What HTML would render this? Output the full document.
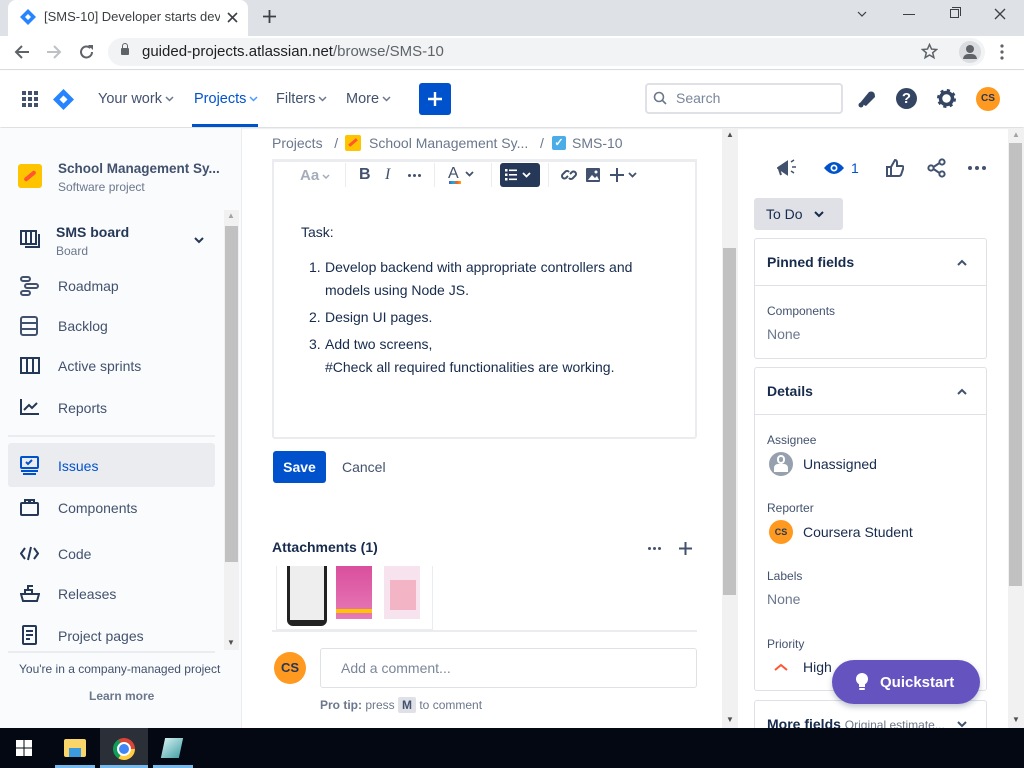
<!DOCTYPE html>
<html><head><meta charset="utf-8">
<style>
*{box-sizing:border-box;margin:0;padding:0}
body{width:1024px;height:768px;overflow:hidden;position:relative;font-family:"Liberation Sans",Arial,sans-serif;color:#172b4d;background:#fff}
.a{position:absolute}
.t{font-size:14px;white-space:nowrap}
svg{display:block}
svg.c{display:inline-block;vertical-align:middle;margin-left:3px}
</style></head><body>
<!-- chrome tab bar -->
<div class="a" style="left:0;top:0;width:1024px;height:36px;background:#dee1e6"></div>
<div class="a" style="left:8px;top:0;width:240px;height:36px;background:#fff;border-radius:8px 8px 0 0"></div>
<svg class="a" style="left:20px;top:9px" width="16" height="16"><path d="M8 0L16 8L8 16L0 8Z" fill="#2684ff"/><path d="M8 5L11 8L8 11L5 8Z" fill="#fff"/></svg>
<div class="a t" style="left:44px;top:9px;font-size:13px;color:#3c4043;width:176px;overflow:hidden">[SMS-10] Developer starts develo</div>
<svg class="a" style="left:227px;top:12px" width="11" height="11"><path d="M1 1l9 9M10 1l-9 9" stroke="#3c4043" stroke-width="1.6"/></svg>
<svg class="a" style="left:263px;top:10px" width="13" height="13"><path d="M6.5 0v13M0 6.5h13" stroke="#3c4043" stroke-width="1.8"/></svg>
<svg class="a" style="left:857px;top:11px" width="10" height="6"><path d="M1 1l4 4 4-4" stroke="#3c4043" stroke-width="1.2" fill="none"/></svg>
<div class="a" style="left:903px;top:14px;width:12px;height:1px;background:#3c4043"></div>
<div class="a" style="left:950px;top:9px;width:9px;height:9px;border:1px solid #3c4043"></div>
<div class="a" style="left:952px;top:7px;width:9px;height:9px;border-top:1px solid #3c4043;border-right:1px solid #3c4043"></div>
<svg class="a" style="left:994px;top:8px" width="12" height="12"><path d="M1 1l10 10M11 1l-10 10" stroke="#3c4043" stroke-width="1.3"/></svg>
<!-- address bar -->
<div class="a" style="left:0;top:36px;width:1024px;height:34px;background:#fff;border-bottom:1px solid #dadce0"></div>
<svg class="a" style="left:14px;top:44px" width="16" height="16"><path d="M15 8H2M8 2L2 8l6 6" stroke="#5f6368" stroke-width="2" fill="none"/></svg>
<svg class="a" style="left:46px;top:44px" width="16" height="16"><path d="M1 8h13M8 2l6 6-6 6" stroke="#bdc1c6" stroke-width="2" fill="none"/></svg>
<svg class="a" style="left:79px;top:44px" width="16" height="16"><path d="M13 8a5.5 5.5 0 1 1-1.6-3.9" stroke="#5f6368" stroke-width="2" fill="none"/><path d="M9 1h5v5Z" fill="#5f6368"/></svg>
<div class="a" style="left:108px;top:38px;width:877px;height:28px;background:#f1f3f4;border-radius:14px"></div>
<div class="a" style="left:121px;top:48px;width:8px;height:7px;background:#5f6368;border-radius:1px"></div>
<div class="a" style="left:122px;top:43px;width:6px;height:7px;border:1.5px solid #5f6368;border-radius:3px 3px 0 0"></div>
<div class="a t" style="left:142px;top:43px;font-size:15px;color:#202124">guided-projects.atlassian.net<span style="color:#5f6368">/browse/SMS-10</span></div>
<svg class="a" style="left:921px;top:43px" width="17" height="17"><path d="M8.5 1.5l2 4.6 5 .4-3.8 3.3 1.2 4.9-4.4-2.7-4.4 2.7 1.2-4.9L1.5 6.5l5-.4Z" stroke="#5f6368" stroke-width="1.5" fill="none"/></svg>
<div class="a" style="left:959px;top:41px;width:22px;height:22px;border-radius:50%;background:#dadce0"></div>
<div class="a" style="left:966px;top:45px;width:8px;height:8px;border-radius:50%;background:#5f6368"></div>
<div class="a" style="left:963px;top:54px;width:14px;height:5px;border-radius:5px 5px 0 0;background:#5f6368"></div>
<svg class="a" style="left:1000px;top:44px" width="4" height="16" fill="#5f6368"><circle cx="2" cy="2" r="1.6"/><circle cx="2" cy="8" r="1.6"/><circle cx="2" cy="14" r="1.6"/></svg>
<!-- jira header -->
<div class="a" style="left:0;top:71px;width:1024px;height:56px;background:#fff;box-shadow:0 1px 2px rgba(9,30,66,.2)"></div>
<svg class="a" style="left:22px;top:91px" width="16" height="16" fill="#42526e"><rect x="0" y="0" width="4" height="4"/><rect x="6" y="0" width="4" height="4"/><rect x="12" y="0" width="4" height="4"/><rect x="0" y="6" width="4" height="4"/><rect x="6" y="6" width="4" height="4"/><rect x="12" y="6" width="4" height="4"/><rect x="0" y="12" width="4" height="4"/><rect x="6" y="12" width="4" height="4"/><rect x="12" y="12" width="4" height="4"/></svg>
<svg class="a" style="left:53px;top:89px" width="21" height="21"><path d="M10.5 0L21 10.5L10.5 21L0 10.5Z" fill="#2684ff"/><path d="M10.5 6.5L14.5 10.5L10.5 14.5L6.5 10.5Z" fill="#fff"/></svg>
<div class="a t" style="left:98px;top:91px;font-size:14.5px;color:#42526e">Your work<svg class="c" width="9" height="6"><path d="M1 1l3.5 3.5L8 1" stroke="#6b778c" stroke-width="1.5" fill="none"/></svg></div>
<div class="a t" style="left:194px;top:91px;font-size:14.5px;color:#0052cc">Projects<svg class="c" width="9" height="6"><path d="M1 1l3.5 3.5L8 1" stroke="#4c9aff" stroke-width="1.5" fill="none"/></svg></div>
<div class="a" style="left:192px;top:124px;width:66px;height:3px;background:#0052cc"></div>
<div class="a t" style="left:276px;top:91px;font-size:14.5px;color:#42526e">Filters<svg class="c" width="9" height="6"><path d="M1 1l3.5 3.5L8 1" stroke="#6b778c" stroke-width="1.5" fill="none"/></svg></div>
<div class="a t" style="left:346px;top:91px;font-size:14.5px;color:#42526e">More<svg class="c" width="9" height="6"><path d="M1 1l3.5 3.5L8 1" stroke="#6b778c" stroke-width="1.5" fill="none"/></svg></div>
<div class="a" style="left:419px;top:83px;width:32px;height:32px;background:#0052cc;border-radius:3px"></div>
<svg class="a" style="left:428px;top:92px" width="14" height="14"><path d="M7 0v14M0 7h14" stroke="#fff" stroke-width="2.4"/></svg>
<div class="a" style="left:645px;top:83px;width:198px;height:31px;border:2px solid #dfe1e6;border-radius:4px"></div>
<svg class="a" style="left:653px;top:91px" width="14" height="14"><circle cx="6" cy="6" r="4.5" stroke="#6b778c" stroke-width="1.6" fill="none"/><path d="M9.5 9.5L13 13" stroke="#6b778c" stroke-width="1.6"/></svg>
<div class="a t" style="left:676px;top:90px;color:#7a869a">Search</div>
<svg class="a" style="left:857px;top:88px" width="20" height="20"><path d="M3 15L12 4Q18 2 18 9L9 18Z" fill="#344563"/><circle cx="4" cy="17" r="2.5" fill="#344563"/></svg>
<div class="a" style="left:896px;top:88px;width:21px;height:21px;border-radius:50%;background:#344563;color:#fff;font-weight:bold;font-size:15px;text-align:center;line-height:21px">?</div>
<svg class="a" style="left:936px;top:88px" width="21" height="21"><circle cx="10.5" cy="10.5" r="6" stroke="#344563" stroke-width="3.5" fill="none"/><circle cx="10.5" cy="10.5" r="8" stroke="#344563" stroke-width="3" fill="none" stroke-dasharray="3 3.3"/></svg>
<div class="a" style="left:976px;top:87px;width:24px;height:24px;border-radius:50%;background:#ff991f;color:#253858;font-size:10px;font-weight:bold;text-align:center;line-height:24px">CS</div>
<!-- sidebar -->
<div class="a" style="left:0;top:128px;width:242px;height:600px;background:#fafbfc;border-right:1px solid #ebecf0"></div>
<div class="a" style="left:18px;top:164px;width:24px;height:24px;background:#ffc400;border-radius:3px"></div>
<div class="a" style="left:23px;top:174px;width:14px;height:4px;background:#ff5630;transform:rotate(-40deg);border-radius:2px"></div>
<div class="a t" style="left:58px;top:161px;font-weight:bold;color:#42526e;font-size:13.5px">School Management Sy...</div>
<div class="a t" style="left:58px;top:180px;font-size:12px;color:#6b778c">Software project</div>
<div class="a" style="left:224px;top:210px;width:15px;height:440px;background:#f1f1f1"></div>
<div class="a" style="left:225px;top:226px;width:13px;height:336px;background:#c1c1c1"></div>
<div class="a t" style="left:227px;top:211px;font-size:8px;color:#a3a3a3">▲</div>
<div class="a t" style="left:227px;top:638px;font-size:8px;color:#505050">▼</div>
<svg class="a" style="left:20px;top:229px" width="22" height="22" fill="none" stroke="#253858" stroke-width="2"><rect x="1" y="2" width="15" height="13"/><path d="M6 2v13M11 2v13M19 5v13H5"/></svg>
<div class="a t" style="left:56px;top:224px;font-weight:bold;color:#253858">SMS board</div>
<div class="a t" style="left:56px;top:244px;font-size:12px;color:#6b778c">Board</div>
<svg class="a" style="left:194px;top:237px" width="10" height="7"><path d="M1 1l4 4 4-4" stroke="#253858" stroke-width="2" fill="none"/></svg>
<svg class="a" style="left:20px;top:276px" width="20" height="20" fill="none" stroke="#42526e" stroke-width="2"><rect x="1" y="1" width="9" height="4" rx="2"/><rect x="5" y="8" width="13" height="4" rx="2"/><rect x="1" y="15" width="9" height="4" rx="2"/></svg>
<div class="a t" style="left:58px;top:278px;color:#42526e">Roadmap</div>
<svg class="a" style="left:20px;top:316px" width="20" height="20" fill="none" stroke="#42526e" stroke-width="2"><rect x="1" y="1" width="16" height="18" rx="2"/><path d="M1 7h16M1 13h16"/></svg>
<div class="a t" style="left:58px;top:318px;color:#42526e">Backlog</div>
<svg class="a" style="left:20px;top:357px" width="20" height="18" fill="none" stroke="#253858" stroke-width="2"><rect x="1" y="1" width="18" height="15"/><path d="M7 1v15M13 1v15"/></svg>
<div class="a t" style="left:58px;top:358px;color:#42526e">Active sprints</div>
<svg class="a" style="left:20px;top:398px" width="20" height="18" fill="none" stroke="#253858" stroke-width="2"><path d="M1 1v15h18M4 12l5-5 3 3 5-5"/></svg>
<div class="a t" style="left:58px;top:400px;color:#42526e">Reports</div>
<div class="a" style="left:8px;top:435px;width:207px;height:2px;background:#ebecf0"></div>
<div class="a" style="left:8px;top:443px;width:207px;height:44px;background:#ebecf0;border-radius:3px"></div>
<svg class="a" style="left:20px;top:456px" width="20" height="20" fill="none" stroke="#0052cc" stroke-width="2"><rect x="1" y="1" width="17" height="11" rx="1"/><path d="M6 6l2 2 4-4M1 15h17M3 18h13"/></svg>
<div class="a t" style="left:58px;top:458px;color:#0052cc">Issues</div>
<svg class="a" style="left:20px;top:499px" width="20" height="18" fill="none" stroke="#253858" stroke-width="2"><rect x="1" y="4" width="17" height="12" rx="1"/><path d="M5 4V1h4v3M10 4V1h4v3"/></svg>
<div class="a t" style="left:58px;top:500px;color:#42526e">Components</div>
<svg class="a" style="left:20px;top:546px" width="19" height="15" fill="none" stroke="#253858" stroke-width="2"><path d="M5 2L1 7.5 5 13M14 2l4 5.5-4 5.5M11 1L8 14"/></svg>
<div class="a t" style="left:58px;top:546px;color:#42526e">Code</div>
<svg class="a" style="left:20px;top:585px" width="20" height="18" fill="none" stroke="#253858" stroke-width="2"><path d="M1 9h18l-2 7H3Z M5 9V5h7v4M8 5V1h5"/></svg>
<div class="a t" style="left:58px;top:586px;color:#42526e">Releases</div>
<svg class="a" style="left:22px;top:625px" width="16" height="20" fill="none" stroke="#253858" stroke-width="2"><rect x="1" y="1" width="13" height="18" rx="1"/><path d="M4 6h7M4 10h7M4 14h4"/></svg>
<div class="a t" style="left:58px;top:628px;color:#42526e">Project pages</div>
<div class="a" style="left:8px;top:651px;width:207px;height:2px;background:#ebecf0"></div>
<div class="a t" style="left:19px;top:662px;font-size:12px;color:#42526e">You're in a company-managed project</div>
<div class="a t" style="left:89px;top:689px;font-size:12px;color:#6b778c;font-weight:bold">Learn more</div>
<!-- main -->
<div class="a t" style="left:272px;top:135px;color:#6b778c">Projects&nbsp;&nbsp; /</div>
<div class="a" style="left:345px;top:135px;width:16px;height:16px;background:#ffc400;border-radius:2px"></div>
<div class="a" style="left:348px;top:141px;width:10px;height:3px;background:#ff5630;transform:rotate(-40deg)"></div>
<div class="a t" style="left:369px;top:135px;color:#6b778c">School Management Sy...&nbsp;&nbsp; /</div>
<div class="a" style="left:552px;top:136px;width:14px;height:14px;background:#4bade8;border-radius:2px;color:#fff;font-size:11px;text-align:center;line-height:14px;font-weight:bold">✓</div>
<div class="a t" style="left:572px;top:135px;color:#6b778c">SMS-10</div>
<div class="a" style="left:272px;top:159px;width:425px;height:280px;border:2px solid #ebecf0;border-top-width:3px;border-radius:0 0 3px 3px"></div>
<div class="a t" style="left:300px;top:167px;font-size:15px;color:#a5adba;font-weight:bold">Aa<svg class="c" width="8" height="5"><path d="M1 1l3 3 3-3" stroke="#a5adba" stroke-width="1.5" fill="none"/></svg></div>
<div class="a" style="left:345px;top:163px;width:1px;height:24px;background:#ebecf0"></div>
<div class="a t" style="left:359px;top:166px;font-size:16px;color:#42526e;font-weight:bold">B</div>
<div class="a t" style="left:385px;top:166px;font-size:16px;color:#42526e;font-style:italic;font-family:'Liberation Serif',serif">I</div>
<svg class="a" style="left:408px;top:174px" width="13" height="3" fill="#42526e"><circle cx="1.5" cy="1.5" r="1.5"/><circle cx="6.5" cy="1.5" r="1.5"/><circle cx="11.5" cy="1.5" r="1.5"/></svg>
<div class="a" style="left:434px;top:163px;width:1px;height:24px;background:#ebecf0"></div>
<div class="a t" style="left:448px;top:165px;font-size:16px;color:#42526e">A<svg class="c" style="margin-left:6px" width="9" height="6"><path d="M1 1l3.5 3.5L8 1" stroke="#42526e" stroke-width="1.8" fill="none"/></svg></div>
<div class="a" style="left:449px;top:181px;width:12px;height:3px;background:linear-gradient(90deg,#6554c0,#00b8d9,#ff5630,#ffab00)"></div>
<div class="a" style="left:491px;top:163px;width:1px;height:24px;background:#ebecf0"></div>
<div class="a" style="left:500px;top:163px;width:40px;height:24px;background:#253858;border-radius:3px"></div>
<svg class="a" style="left:505px;top:168px" width="30" height="14" fill="#fff"><rect x="0" y="1" width="2.5" height="2.5"/><rect x="0" y="5.5" width="2.5" height="2.5"/><rect x="0" y="10" width="2.5" height="2.5"/><rect x="4" y="1.5" width="8" height="1.6"/><rect x="4" y="6" width="8" height="1.6"/><rect x="4" y="10.5" width="8" height="1.6"/><path d="M18 5l3.5 3.5L25 5" stroke="#fff" stroke-width="1.8" fill="none"/></svg>
<div class="a" style="left:548px;top:163px;width:1px;height:24px;background:#ebecf0"></div>
<svg class="a" style="left:561px;top:167px" width="16" height="16" fill="none" stroke="#42526e" stroke-width="2"><path d="M7 9l-2 2a2.5 2.5 0 0 1-3.5-3.5l3-3A2.5 2.5 0 0 1 8 5M9 7l2-2a2.5 2.5 0 0 1 3.5 3.5l-3 3A2.5 2.5 0 0 1 8 11"/></svg>
<svg class="a" style="left:586px;top:168px" width="14" height="14"><rect x="0" y="0" width="14" height="14" rx="1" fill="#42526e"/><path d="M2 12l4-5 3 3 2-2 2 4Z" fill="#fff"/><circle cx="10" cy="4" r="1.5" fill="#fff"/></svg>
<svg class="a" style="left:610px;top:168px" width="28" height="14"><path d="M7 0v14M0 7h14" stroke="#42526e" stroke-width="2"/><path d="M19 5l3.5 3.5L26 5" stroke="#42526e" stroke-width="1.8" fill="none"/></svg>
<div class="a t" style="left:301px;top:224px;color:#172b4d">Task:</div>
<div class="a" style="left:309px;top:256px;font-size:14px;color:#172b4d;line-height:23px">
<div style="display:flex"><span style="width:16px">1.</span><span>Develop backend with appropriate controllers and<br>models using Node JS.</span></div>
<div style="display:flex;margin-top:4px"><span style="width:16px">2.</span><span>Design UI pages.</span></div>
<div style="display:flex;margin-top:4px"><span style="width:16px">3.</span><span>Add two screens,<br>#Check all required functionalities are working.</span></div>
</div>
<div class="a" style="left:273px;top:451px;width:53px;height:32px;background:#0052cc;border-radius:3px;color:#fff;font-weight:bold;font-size:14px;text-align:center;line-height:32px">Save</div>
<div class="a t" style="left:342px;top:459px;color:#42526e">Cancel</div>
<div class="a t" style="left:272px;top:539px;font-weight:bold;color:#172b4d;font-size:14px">Attachments (1)</div>
<svg class="a" style="left:648px;top:547px" width="13" height="3" fill="#42526e"><circle cx="1.5" cy="1.5" r="1.5"/><circle cx="6.5" cy="1.5" r="1.5"/><circle cx="11.5" cy="1.5" r="1.5"/></svg>
<svg class="a" style="left:679px;top:542px" width="13" height="13"><path d="M6.5 0v13M0 6.5h13" stroke="#42526e" stroke-width="2"/></svg>
<div class="a" style="left:276px;top:566px;width:157px;height:64px;border:1px solid #ebecf0;border-top:none"></div>
<div class="a" style="left:287px;top:566px;width:40px;height:60px;background:#222;border-radius:0 0 6px 6px"></div>
<div class="a" style="left:290px;top:566px;width:34px;height:54px;background:#eee"></div>
<div class="a" style="left:336px;top:566px;width:36px;height:53px;background:linear-gradient(#d94f9c,#e77ab7)"></div>
<div class="a" style="left:336px;top:609px;width:36px;height:4px;background:#ffc400"></div>
<div class="a" style="left:384px;top:566px;width:36px;height:53px;background:#f7e3ee"></div>
<div class="a" style="left:390px;top:580px;width:26px;height:30px;background:#f3b4c6"></div>
<div class="a" style="left:272px;top:630px;width:425px;height:2px;background:#ebecf0"></div>
<div class="a" style="left:274px;top:652px;width:32px;height:32px;border-radius:50%;background:#ff991f;color:#253858;font-weight:bold;font-size:13px;text-align:center;line-height:32px">CS</div>
<div class="a" style="left:320px;top:648px;width:377px;height:40px;border:1px solid #dfe1e6;border-radius:3px"></div>
<div class="a t" style="left:341px;top:660px;color:#7a869a">Add a comment...</div>
<div class="a t" style="left:320px;top:698px;font-size:12px;color:#6b778c"><b>Pro tip:</b> press <span style="background:#dfe1e6;padding:1px 4px;border-radius:2px;font-weight:bold;color:#42526e">M</span> to comment</div>
<!-- main scrollbar -->
<div class="a" style="left:722px;top:128px;width:16px;height:600px;background:#f1f1f1"></div>
<div class="a" style="left:723px;top:248px;width:13px;height:347px;background:#c1c1c1"></div>
<div class="a t" style="left:726px;top:130px;font-size:8px;color:#505050">▲</div>
<div class="a t" style="left:726px;top:715px;font-size:8px;color:#505050">▼</div>
<!-- right panel -->
<svg class="a" style="left:777px;top:159px" width="22" height="18"><path d="M1 9l9-6v12Z M2 10l2 6" fill="#42526e" stroke="#42526e" stroke-width="2"/><path d="M14 3l3-2M15 8h4M14 12l3 2" stroke="#42526e" stroke-width="1.6"/></svg>
<svg class="a" style="left:823px;top:160px" width="22" height="16"><path d="M1 8Q11 -4 21 8Q11 20 1 8Z" fill="#0052cc"/><circle cx="11" cy="8" r="3.5" fill="#fff"/><circle cx="11" cy="8" r="1.8" fill="#0052cc"/></svg>
<div class="a t" style="left:851px;top:160px;font-size:14px;color:#0052cc">1</div>
<svg class="a" style="left:886px;top:159px" width="18" height="18" fill="none" stroke="#42526e" stroke-width="2"><path d="M1 8h4v9H1Z M5 8l4-7q2 0 2 3v3h5q2 0 1 3l-2 6q-1 1-2 1H5"/></svg>
<svg class="a" style="left:927px;top:158px" width="20" height="20" fill="none" stroke="#42526e" stroke-width="2"><circle cx="15" cy="4" r="2.6"/><circle cx="4" cy="10" r="2.6"/><circle cx="15" cy="16" r="2.6"/><path d="M6.5 9l6-4M6.5 11l6 4"/></svg>
<svg class="a" style="left:968px;top:166px" width="18" height="4" fill="#42526e"><circle cx="2" cy="2" r="2"/><circle cx="9" cy="2" r="2"/><circle cx="16" cy="2" r="2"/></svg>
<div class="a" style="left:754px;top:198px;width:89px;height:32px;background:#dfe1e6;border-radius:3px"></div>
<div class="a t" style="left:766px;top:206px;color:#172b4d">To Do</div>
<svg class="a" style="left:814px;top:211px" width="10" height="7"><path d="M1 1l4 4 4-4" stroke="#172b4d" stroke-width="2" fill="none"/></svg>
<div class="a" style="left:754px;top:238px;width:233px;height:121px;border:1px solid #dfe1e6;border-radius:3px"></div>
<div class="a" style="left:755px;top:285px;width:231px;height:1px;background:#dfe1e6"></div>
<div class="a t" style="left:767px;top:254px;font-weight:bold;color:#172b4d;font-size:14px">Pinned fields</div>
<svg class="a" style="left:957px;top:259px" width="10" height="7"><path d="M1 6l4-4 4 4" stroke="#42526e" stroke-width="2" fill="none"/></svg>
<div class="a t" style="left:767px;top:304px;font-size:12px;color:#42526e">Components</div>
<div class="a t" style="left:767px;top:326px;color:#6b778c">None</div>
<div class="a" style="left:754px;top:367px;width:233px;height:324px;border:1px solid #dfe1e6;border-radius:3px"></div>
<div class="a" style="left:755px;top:414px;width:231px;height:1px;background:#dfe1e6"></div>
<div class="a t" style="left:767px;top:383px;font-weight:bold;color:#172b4d">Details</div>
<svg class="a" style="left:957px;top:388px" width="10" height="7"><path d="M1 6l4-4 4 4" stroke="#42526e" stroke-width="2" fill="none"/></svg>
<div class="a t" style="left:767px;top:433px;font-size:12px;color:#42526e">Assignee</div>
<div class="a" style="left:769px;top:452px;width:24px;height:24px;border-radius:50%;background:#97a0af;overflow:hidden"></div>
<div class="a" style="left:777px;top:455px;width:8px;height:9px;border-radius:4px;border:2px solid #fff"></div>
<div class="a" style="left:774px;top:464px;width:14px;height:8px;border-radius:4px 4px 0 0;background:#fff"></div>
<div class="a t" style="left:803px;top:456px;color:#172b4d">Unassigned</div>
<div class="a t" style="left:767px;top:501px;font-size:12px;color:#42526e">Reporter</div>
<div class="a" style="left:769px;top:520px;width:24px;height:24px;border-radius:50%;background:#ff991f;color:#253858;font-size:9px;font-weight:bold;text-align:center;line-height:24px">CS</div>
<div class="a t" style="left:803px;top:524px;color:#172b4d">Coursera Student</div>
<div class="a t" style="left:767px;top:569px;font-size:12px;color:#42526e">Labels</div>
<div class="a t" style="left:767px;top:591px;color:#6b778c">None</div>
<div class="a t" style="left:767px;top:637px;font-size:12px;color:#42526e">Priority</div>
<svg class="a" style="left:774px;top:663px" width="14" height="8"><path d="M1 7l6-5 6 5" stroke="#ff5630" stroke-width="2" fill="none"/></svg>
<div class="a t" style="left:803px;top:659px;color:#172b4d">High</div>
<div class="a" style="left:754px;top:700px;width:233px;height:40px;border:1px solid #dfe1e6;border-radius:3px"></div>
<div class="a t" style="left:767px;top:716px;font-weight:bold;color:#172b4d">More fields <span style="font-weight:normal;font-size:12px;color:#6b778c">Original estimate...</span></div>
<svg class="a" style="left:957px;top:721px" width="10" height="7"><path d="M1 1l4 4 4-4" stroke="#42526e" stroke-width="2" fill="none"/></svg>
<div class="a" style="left:832px;top:660px;width:148px;height:44px;background:#6554c0;border-radius:22px;box-shadow:0 3px 6px rgba(9,30,66,.25)"></div>
<svg class="a" style="left:855px;top:672px" width="14" height="20"><circle cx="7" cy="7" r="6" fill="#fff"/><rect x="4" y="11" width="6" height="4" fill="#fff"/><rect x="4" y="16" width="6" height="2" rx="1" fill="#fff"/></svg>
<div class="a t" style="left:880px;top:674px;font-size:15px;font-weight:bold;color:#fff">Quickstart</div>
<!-- right scrollbar -->
<div class="a" style="left:1008px;top:128px;width:16px;height:600px;background:#f1f1f1"></div>
<div class="a" style="left:1009px;top:143px;width:13px;height:443px;background:#c1c1c1"></div>
<div class="a t" style="left:1012px;top:130px;font-size:8px;color:#a3a3a3">▲</div>
<div class="a t" style="left:1012px;top:715px;font-size:8px;color:#505050">▼</div>
<!-- taskbar -->
<div class="a" style="left:0;top:728px;width:1024px;height:40px;background:#030812"></div>
<svg class="a" style="left:16px;top:740px" width="16" height="16" fill="#fff"><rect x="0" y="0" width="7.5" height="7.5"/><rect x="8.5" y="0" width="7.5" height="7.5"/><rect x="0" y="8.5" width="7.5" height="7.5"/><rect x="8.5" y="8.5" width="7.5" height="7.5"/></svg>
<div class="a" style="left:64px;top:739px;width:22px;height:18px;background:#f9d56a;border-radius:2px"></div>
<div class="a" style="left:69px;top:748px;width:12px;height:9px;background:#3c9be0"></div>
<div class="a" style="left:55px;top:765px;width:40px;height:3px;background:#76b9ed"></div>
<div class="a" style="left:100px;top:728px;width:48px;height:40px;background:#2b2f38"></div>
<div class="a" style="left:113px;top:738px;width:22px;height:22px;border-radius:50%;background:conic-gradient(from -30deg,#db4437 0 120deg,#ffcd40 120deg 240deg,#0f9d58 240deg 360deg)"></div>
<div class="a" style="left:119px;top:744px;width:10px;height:10px;border-radius:50%;background:#4285f4;border:2px solid #fff;box-sizing:content-box;margin:-2px"></div>
<div class="a" style="left:100px;top:765px;width:48px;height:3px;background:#76b9ed"></div>
<div class="a" style="left:163px;top:738px;width:18px;height:20px;background:linear-gradient(135deg,#cfeef0,#4aa3a8);transform:skewX(-12deg)"></div>
<div class="a" style="left:153px;top:765px;width:40px;height:3px;background:#76b9ed"></div>
</body></html>
